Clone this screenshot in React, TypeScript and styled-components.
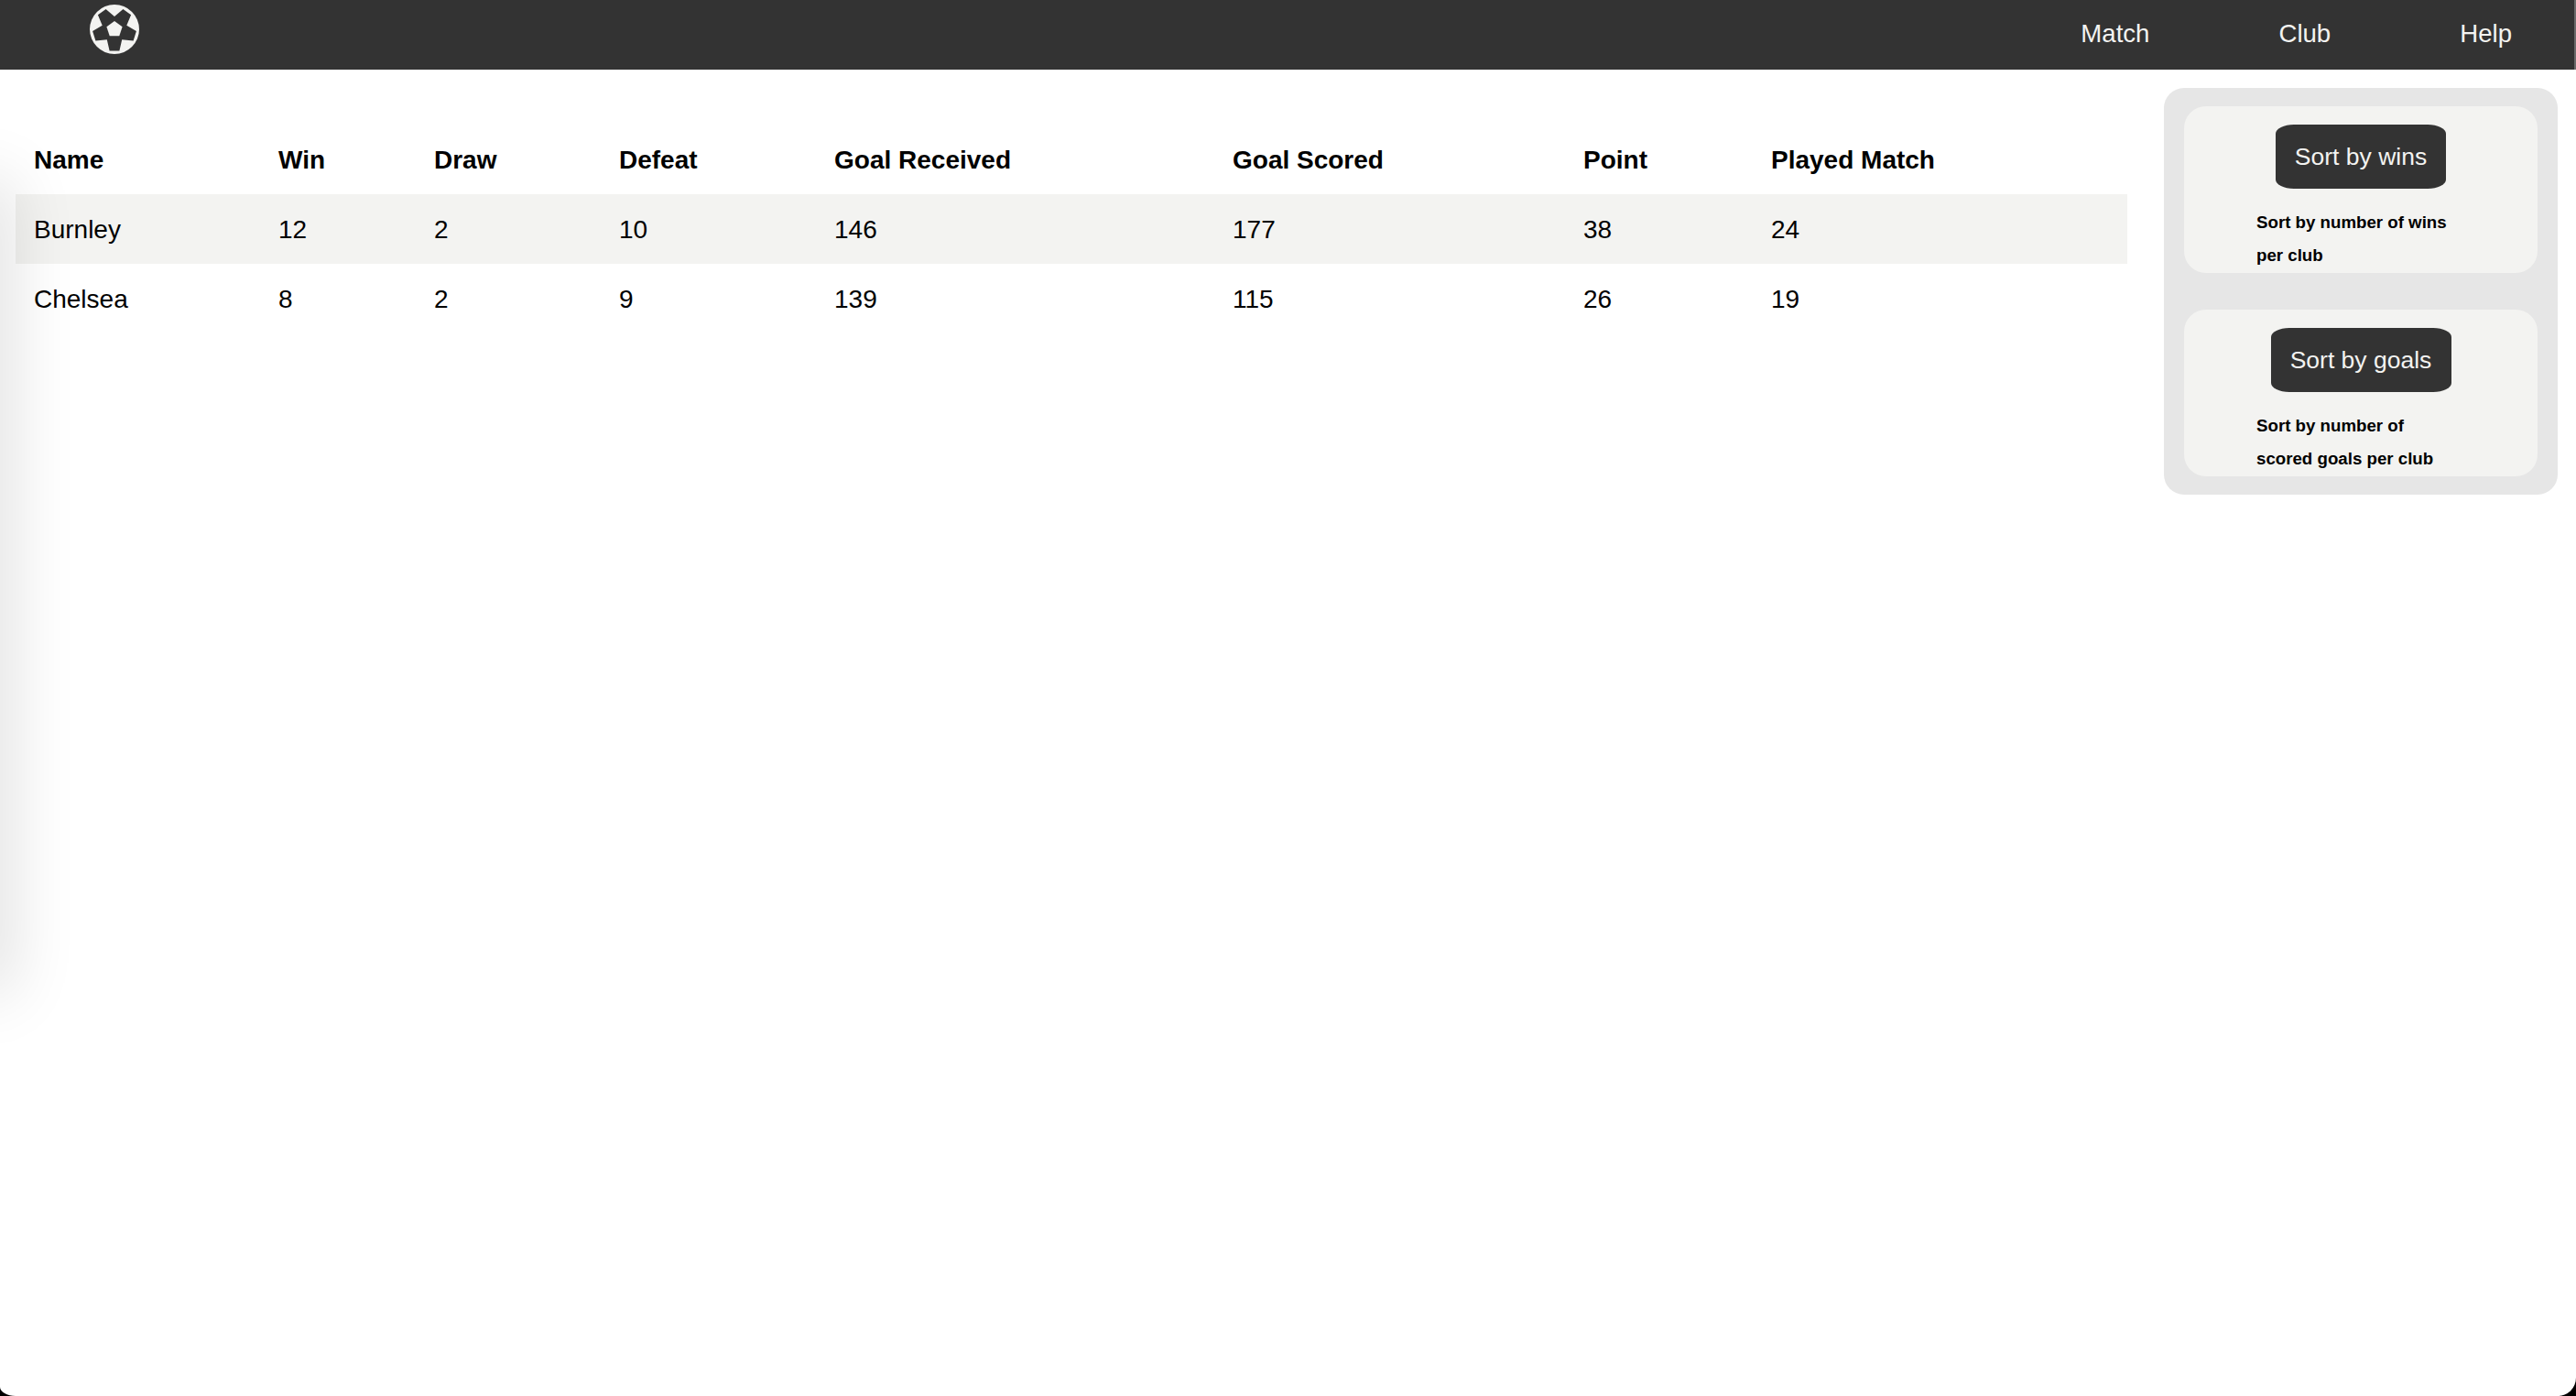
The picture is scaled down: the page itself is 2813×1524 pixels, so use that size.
import React from "react";
import styled, { createGlobalStyle } from "styled-components";

const GlobalStyle = createGlobalStyle`
  html, body {
    margin: 0;
    padding: 0;
    height: 100%;
    background: #000;
    overflow: hidden;
  }
  body {
    font-family: "Liberation Sans", Arial, sans-serif;
    color: #000;
  }
`;

const columns = "267px 170px 202px 235px 435px 383px 205px 1fr";

const clubs = [
  { name: "Burnley", win: 12, draw: 2, defeat: 10, received: 146, scored: 177, point: 38, played: 24 },
  { name: "Chelsea", win: 8, draw: 2, defeat: 9, received: 139, scored: 115, point: 26, played: 19 },
];

const headers = ["Name", "Win", "Draw", "Defeat", "Goal Received", "Goal Scored", "Point", "Played Match"];

const Page = styled.div`
  position: relative;
  height: 1524px;
  overflow: hidden;
  background: #fff;
  border-radius: 0 0 20px 17px / 0 0 20px 10px;
`;

const Navbar = styled.nav`
  display: flex;
  align-items: center;
  justify-content: space-between;
  height: 76px;
  padding: 0 68px 0 98px;
  background: #333;
  border-right: 2px solid #6a6a6a;
  color: #f3f3f1;
  box-sizing: border-box;
`;

const Logo = styled.svg`
  display: block;
  width: 54px;
  height: 54px;
  margin-top: -12px;
`;

const NavLinks = styled.div`
  display: flex;
  gap: 141px;
  font-size: 27.6px;
`;

const NavLink = styled.span`
  line-height: 70px;
  height: 72px;
`;

const Main = styled.main`
  display: flex;
  align-items: flex-start;
  justify-content: space-between;
  padding: 20px 20px 0 17px;
`;

const Table = styled.div`
  width: 2306px;
  padding-top: 40px;
`;

const Row = styled.div<{ $shaded?: boolean; $head?: boolean }>`
  display: grid;
  grid-template-columns: ${columns};
  align-items: center;
  height: 76px;
  padding: 1px 0 0 20px;
  box-sizing: border-box;
  font-size: 28px;
  font-weight: ${(p) => (p.$head ? 700 : 400)};
  background: ${(p) => (p.$shaded ? "#f3f3f1" : "transparent")};
`;

const Side = styled.aside`
  display: flex;
  flex-direction: column;
  gap: 40px;
  width: 430px;
  padding: 20px 22px;
  box-sizing: border-box;
  background: #e6e6e6;
  border-radius: 22px;
`;

const Card = styled.section`
  height: 182px;
  padding-top: 20px;
  box-sizing: border-box;
  background: #f3f3f1;
  border-radius: 24px;
`;

const SortButton = styled.button<{ $w: number }>`
  display: block;
  width: ${(p) => p.$w}px;
  height: 70px;
  margin: 0 auto;
  padding: 0;
  border: 0;
  border-radius: 20px / 10px;
  background: #333;
  color: #f3f3f1;
  font-family: inherit;
  font-size: 26.5px;
`;

const Hint = styled.p`
  margin: 19px 0 0 79px;
  font-size: 18.7px;
  font-weight: 700;
  line-height: 36px;
`;

// closed drawer parked off the left edge, only its shadow shows
const Drawer = styled.div`
  position: absolute;
  left: -40px;
  top: 210px;
  width: 40px;
  height: 860px;
  box-shadow: 0 0 70px 14px rgba(0, 0, 0, 0.12);
  pointer-events: none;
`;

const polar = (r: number, deg: number) => {
  const a = (deg * Math.PI) / 180;
  return `${(27 + r * Math.cos(a)).toFixed(1)} ${(27 + r * Math.sin(a)).toFixed(1)}`;
};

const tips = [-126, -54, 18, 90, 162];
const starPath =
  "M" +
  tips
    .map((t) => `${polar(24, t - 13)}L${polar(24, t + 13)}L${polar(14, t + 36)}`)
    .join("L") +
  "Z";
const pentagon = "M" + [-90, -18, 54, 126, 198].map((t) => polar(9, t)).join("L") + "Z";

function Ball() {
  return (
    <Logo viewBox="0 0 54 54">
      <circle cx="27" cy="27" r="27" fill="#f3f3f1" />
      <path fill="#333" d={starPath} />
      <path fill="#f3f3f1" d={pentagon} />
    </Logo>
  );
}

export default function App() {
  return (
    <Page>
      <GlobalStyle />
      <Navbar>
        <Ball />
        <NavLinks>
          <NavLink>Match</NavLink>
          <NavLink>Club</NavLink>
          <NavLink>Help</NavLink>
        </NavLinks>
      </Navbar>
      <Drawer />
      <Main>
        <Table>
          <Row $head>
            {headers.map((h) => (
              <span key={h}>{h}</span>
            ))}
          </Row>
          {clubs.map((c, i) => (
            <Row key={c.name} $shaded={i === 0}>
              <span>{c.name}</span>
              <span>{c.win}</span>
              <span>{c.draw}</span>
              <span>{c.defeat}</span>
              <span>{c.received}</span>
              <span>{c.scored}</span>
              <span>{c.point}</span>
              <span>{c.played}</span>
            </Row>
          ))}
        </Table>
        <Side>
          <Card>
            <SortButton $w={186}>Sort by wins</SortButton>
            <Hint>
              Sort by number of wins
              <br />
              per club
            </Hint>
          </Card>
          <Card>
            <SortButton $w={197}>Sort by goals</SortButton>
            <Hint>
              Sort by number of
              <br />
              scored goals per club
            </Hint>
          </Card>
        </Side>
      </Main>
    </Page>
  );
}
